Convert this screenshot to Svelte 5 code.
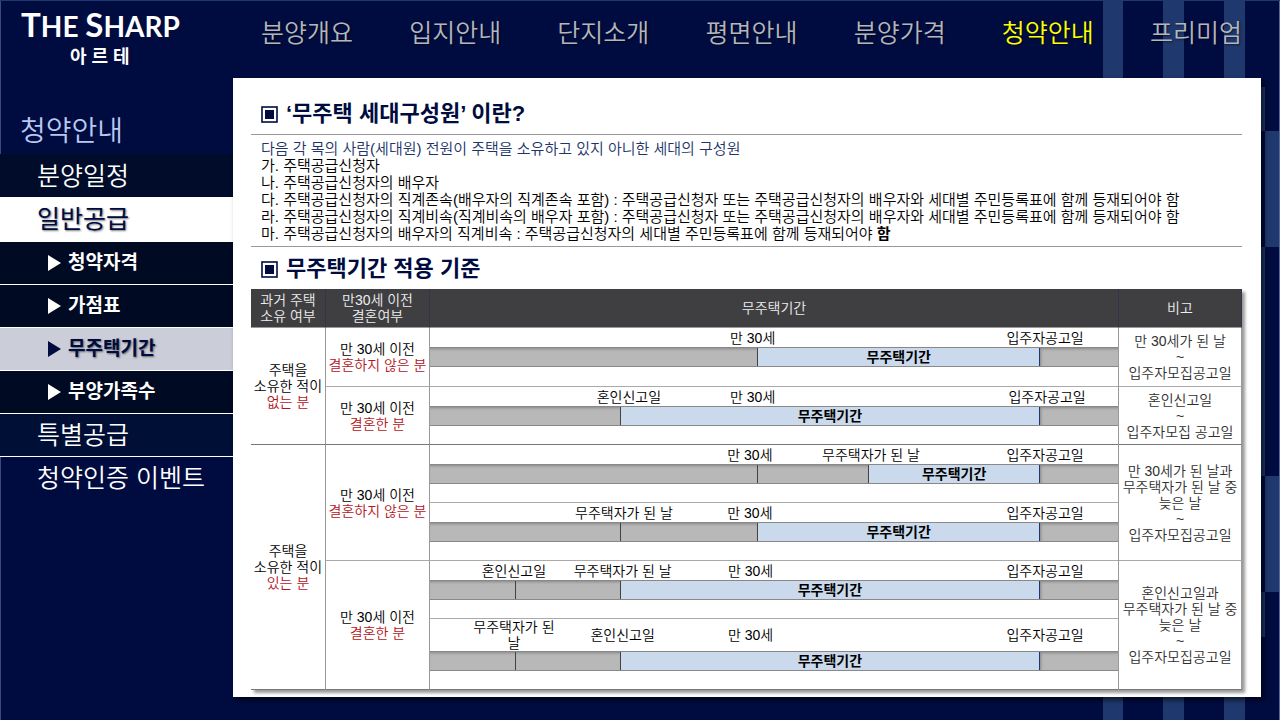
<script>
  const nav = ['분양개요', '입지안내', '단지소개', '평면안내', '분양가격', '청약안내', '프리미엄'];
  const currentNav = '청약안내';

  const side = [
    { text: '분양일정', kind: 'top dark' },
    { text: '일반공급', kind: 'top open' },
    { text: '청약자격', kind: 'sub' },
    { text: '가점표', kind: 'sub' },
    { text: '무주택기간', kind: 'sub current' },
    { text: '부양가족수', kind: 'sub' },
    { text: '특별공급', kind: 'top lined shade' },
    { text: '청약인증 이벤트', kind: 'top lined' },
  ];

  const rules = [
    '가. 주택공급신청자',
    '나. 주택공급신청자의 배우자',
    '다. 주택공급신청자의 직계존속(배우자의 직계존속 포함) : 주택공급신청자 또는 주택공급신청자의 배우자와 세대별 주민등록표에 함께 등재되어야 함',
    '라. 주택공급신청자의 직계비속(직계비속의 배우자 포함) : 주택공급신청자 또는 주택공급신청자의 배우자와 세대별 주민등록표에 함께 등재되어야 함',
  ];

  const NOTICE = '입주자공고일';
  const AGE = '만 30세';
  const WED = '혼인신고일';
  const FREE = '무주택자가 된 날';
  const END = 88.7;

  // Label centres and segment edges are percentages of the timeline width.
  const rows = [
    {
      owner: ['주택을', '소유한 적이', '없는 분'],
      marriage: '결혼하지 않은 분',
      lines: [{ labels: [[AGE, 46.9], [NOTICE, 89.4]], ticks: [], start: 47.7 }],
      note: ['만 30세가 된 날', '~', '입주자모집공고일'],
    },
    {
      marriage: '결혼한 분',
      groupEnd: true,
      lines: [{ labels: [[WED, 28.9], [AGE, 46.9], [NOTICE, 89.7]], ticks: [], start: 27.7 }],
      note: ['혼인신고일', '~', '입주자모집 공고일'],
    },
    {
      owner: ['주택을', '소유한 적이', '있는 분'],
      marriage: '결혼하지 않은 분',
      lines: [
        { labels: [[AGE, 46.5], [FREE, 64.1], [NOTICE, 89.4]], ticks: [47.7], start: 63.8 },
        { labels: [[FREE, 28.2], [AGE, 46.5], [NOTICE, 89.4]], ticks: [27.7], start: 47.7 },
      ],
      note: ['만 30세가 된 날과', '무주택자가 된 날 중', '늦은 날', '~', '입주자모집공고일'],
    },
    {
      marriage: '결혼한 분',
      groupEnd: true,
      lines: [
        { labels: [[WED, 12.2], [FREE, 28], [AGE, 46.6], [NOTICE, 89.4]], ticks: [12.5], start: 27.7 },
        { labels: [['무주택자가 된\n날', 12.2], [WED, 28], [AGE, 46.6], [NOTICE, 89.4]], ticks: [12.5], start: 27.7, tall: true },
      ],
      note: ['혼인신고일과', '무주택자가 된 날 중', '늦은 날', '~', '입주자모집공고일'],
    },
  ];

  function segments(line) {
    const edges = [0, ...line.ticks, line.start];
    return edges.slice(1).map((edge, i) => edge - edges[i]);
  }
</script>

<div class="page">
  <header>
    <a class="logo" href="#home">
      <span class="brand"><b>T</b>HE <b>S</b>HARP</span>
      <span class="name">아 르 테</span>
    </a>
    <nav class="main-nav" aria-label="주 메뉴">
      {#each nav as item}
        <a href="#menu" class:on={item === currentNav}>{item}</a>
      {/each}
    </nav>
  </header>

  <div class="body">
    <aside>
      <h1>청약안내</h1>
      <nav>
        {#each side as item}
          <a href="#side" class={item.kind}>
            {#if item.kind.startsWith('sub')}
              <svg viewBox="0 0 13 16" width="13" height="16" aria-hidden="true"><path d="M0 0 13 8 0 16Z" fill="currentColor" /></svg>
            {/if}
            <span>{item.text}</span>
          </a>
        {/each}
      </nav>
    </aside>

    <main>
      {#snippet marker()}
        <svg viewBox="0 0 17 17" width="17" height="17" aria-hidden="true">
          <rect x="1" y="1" width="15" height="15" fill="none" stroke="currentColor" stroke-width="1.6" />
          <rect x="4" y="4" width="9" height="9" fill="currentColor" />
        </svg>
      {/snippet}

      <h2>{@render marker()}<span>‘무주택 세대구성원’ 이란?</span></h2>
      <div class="rules">
        <p class="lead">다음 각 목의 사람(세대원) 전원이 주택을 소유하고 있지 아니한 세대의 구성원</p>
        {#each rules as rule}
          <p>{rule}</p>
        {/each}
        <p>마. 주택공급신청자의 배우자의 직계비속 : 주택공급신청자의 세대별 주민등록표에 함께 등재되어야 <b>함</b></p>
      </div>

      <h2>{@render marker()}<span>무주택기간 적용 기준</span></h2>
      <table>
        <colgroup><col class="c1" /><col class="c2" /><col /><col class="c4" /></colgroup>
        <thead>
          <tr>
            <th>과거 주택<br />소유 여부</th>
            <th>만30세 이전<br />결혼여부</th>
            <th>무주택기간</th>
            <th>비고</th>
          </tr>
        </thead>
        <tbody>
          {#each rows as row}
            <tr class:group-end={row.groupEnd}>
              {#if row.owner}
                <td rowspan="2" class="owner">
                  {row.owner[0]}<br />{row.owner[1]}<br /><em>{row.owner[2]}</em>
                </td>
              {/if}
              <td>만 30세 이전<br /><em>{row.marriage}</em></td>
              <td class="time">
                {#each row.lines as line}
                  <div class="labels" class:tall={line.tall}>
                    {#each line.labels as [text, at], i}
                      <span style="margin-left: {at - (i ? line.labels[i - 1][1] : 0)}%"><span>{text}</span></span>
                    {/each}
                  </div>
                  <div class="bar">
                    {#each segments(line) as width}
                      <span class="off" style="width: {width}%"></span>
                    {/each}
                    <strong style="width: {END - line.start}%">무주택기간</strong>
                    <span class="rest"></span>
                  </div>
                  <div class="gap"></div>
                {/each}
              </td>
              <td class="note">
                {#each row.note as text}<div>{text}</div>{/each}
              </td>
            </tr>
          {/each}
        </tbody>
      </table>
    </main>
  </div>
</div>

<style>
  :global(body) {
    margin: 0;
    background: #000c40;
  }

  .page {
    min-height: 100vh;
    box-sizing: border-box;
    display: flex;
    flex-direction: column;
    font-family: 'Liberation Sans', 'Noto Sans CJK KR', sans-serif;
    color: #fff;
    background:
      linear-gradient(#3a4a7c, #3a4a7c) left top / 1px 100% no-repeat,
      linear-gradient(#5566a0, #5566a0) right top / 1px 100% no-repeat,
      linear-gradient(#1f386d, #1f386d) right 157px top 0 / 20px 100% no-repeat,
      linear-gradient(#1f386d, #1f386d) right 96px top 0 / 21px 100% no-repeat,
      linear-gradient(#1f386d, #1f386d) right 35px top 0 / 21px 100% no-repeat,
      linear-gradient(#1f386d, #1f386d) right 1px top 130px / 14px 116px no-repeat,
      linear-gradient(#1f386d, #1f386d) right 1px top 475px / 14px 116px no-repeat,
      linear-gradient(#1f386d, #1f386d) right 15px top 86px / 6px 44px no-repeat,
      linear-gradient(#1f386d, #1f386d) right 15px top 246px / 6px 229px no-repeat,
      linear-gradient(#1f386d, #1f386d) right 15px top 591px / 6px 45px no-repeat,
      #000c40;
    border-top: 1px solid #1f386d;
  }

  a {
    color: inherit;
    text-decoration: none;
  }

  header {
    display: flex;
    height: 77px;
  }

  .logo {
    width: 233px;
    flex: none;
    box-sizing: border-box;
    padding: 6px 0 0 21px;
    display: flex;
    flex-direction: column;
  }

  .brand {
    font: 700 28px/34px Lato, sans-serif;
    white-space: nowrap;
  }

  .brand b {
    font-size: 33px;
    font-weight: 700;
  }

  .name {
    padding-left: 49px;
    font-size: 18px;
    line-height: 28px;
    font-weight: 700;
  }

  .main-nav {
    flex: 1;
    display: flex;
    justify-content: space-between;
    padding: 13px 38px 0 28px;
    font-size: 25px;
    line-height: 38px;
    font-weight: 350;
    color: #b4b6bd;
    text-shadow: 1px 1px 2px #0008;
  }

  .main-nav .on {
    color: #ff0;
  }

  .body {
    flex: 1;
    display: flex;
    align-items: flex-start;
    padding-right: 19px;
  }

  aside {
    width: 233px;
    flex: none;
  }

  h1 {
    margin: 0;
    padding: 34px 0 2px 20px;
    font-size: 28px;
    line-height: 40px;
    font-weight: 350;
    color: #b9c8f0;
  }

  aside a {
    display: flex;
    align-items: center;
    box-sizing: border-box;
    height: 43px;
    padding-left: 37px;
    font-size: 25px;
    line-height: 40px;
    font-weight: 350;
    white-space: nowrap;
  }

  aside .dark {
    background: #000c2a;
  }

  aside .open {
    height: 44px;
    background: #fff;
    color: #000c40;
    font-weight: 400;
    text-shadow: 1px 1px 2px #0008;
  }

  aside .sub {
    gap: 7px;
    padding-left: 48px;
    border-top: 1px solid #fff;
    background: #000a22;
    font-size: 19px;
    font-weight: 700;
  }

  aside .current {
    background: #cbced8;
    color: #000c40;
    text-shadow: 1px 1px 2px #0008;
  }

  aside .lined {
    border-top: 1px solid #fff;
  }

  aside .shade {
    background: #000f36;
  }

  main {
    flex: 1;
    min-width: 0;
    box-sizing: border-box;
    padding: 14px 19px 7px 18px;
    background: #fff;
    color: #000;
    box-shadow: 3px 3px 5px #0009;
  }

  h2 {
    display: flex;
    align-items: center;
    gap: 8px;
    margin: 0;
    padding: 2px 0 0 10px;
    font-size: 22px;
    line-height: 40px;
    font-weight: 700;
    color: #000c40;
  }

  .rules {
    padding: 5px 0 4px 10px;
    border-top: 1px solid #999;
    border-bottom: 1px solid #999;
    font-size: 15px;
    line-height: 17px;
    font-weight: 350;
    white-space: nowrap;
  }

  p {
    margin: 0;
  }

  .lead {
    color: #203468;
  }

  table {
    width: 100%;
    table-layout: fixed;
    border-collapse: separate;
    border-spacing: 0;
    font-size: 14px;
    line-height: 16px;
    text-align: center;
    white-space: nowrap;
    box-shadow: 3px 3px 3px #0006;
  }

  .c1 {
    width: 75px;
  }

  .c2 {
    width: 104px;
  }

  .c4 {
    width: 123px;
  }

  th,
  td {
    padding: 0;
    box-sizing: border-box;
    vertical-align: middle;
    border-right: 1px solid #999;
    border-bottom: 1px solid #aaa;
  }

  th {
    height: 39px;
    background: #3f3f41;
    color: #eee;
    font-weight: 350;
    border-right-color: #33364a;
    border-bottom-color: #999;
  }

  td {
    background: #fff;
    font-weight: 350;
  }

  .group-end td,
  .owner {
    border-bottom-color: #777;
  }

  em {
    font-style: normal;
    color: #b3141c;
  }

  td.time {
    border-bottom: 0;
  }

  .note {
    color: #303030;
  }

  .labels {
    display: flex;
    align-items: center;
    box-sizing: border-box;
    height: 19px;
  }

  .labels.tall {
    height: 32px;
  }

  .labels > span {
    width: 0;
    display: flex;
    justify-content: center;
    white-space: pre;
  }

  .labels > span > span {
    flex: none;
  }

  .bar {
    display: flex;
    box-sizing: border-box;
    height: 20px;
    border-top: 1px solid #888;
    border-bottom: 1px solid #888;
    background: #b8b8b8;
    line-height: 18px;
  }

  .bar > * {
    box-sizing: border-box;
    flex: none;
  }

  .off {
    border-right: 1px solid #444;
    box-shadow: inset 0 3px 3px -2px #0004;
  }

  .off:last-of-type {
    border-right-color: #1f386d;
  }

  .bar strong {
    background: #cadaec;
    border-right: 1px solid #1f386d;
    font-weight: 700;
  }

  .bar .rest {
    flex: 1;
    border: 0;
    box-shadow: inset 3px 3px 3px -2px #0004;
  }

  .gap {
    box-sizing: border-box;
    height: 19px;
    border-bottom: 1px solid #aaa;
  }

  tbody tr:first-child .gap {
    height: 20px;
  }

  .group-end .gap:last-child {
    border-bottom-color: #777;
  }
</style>
